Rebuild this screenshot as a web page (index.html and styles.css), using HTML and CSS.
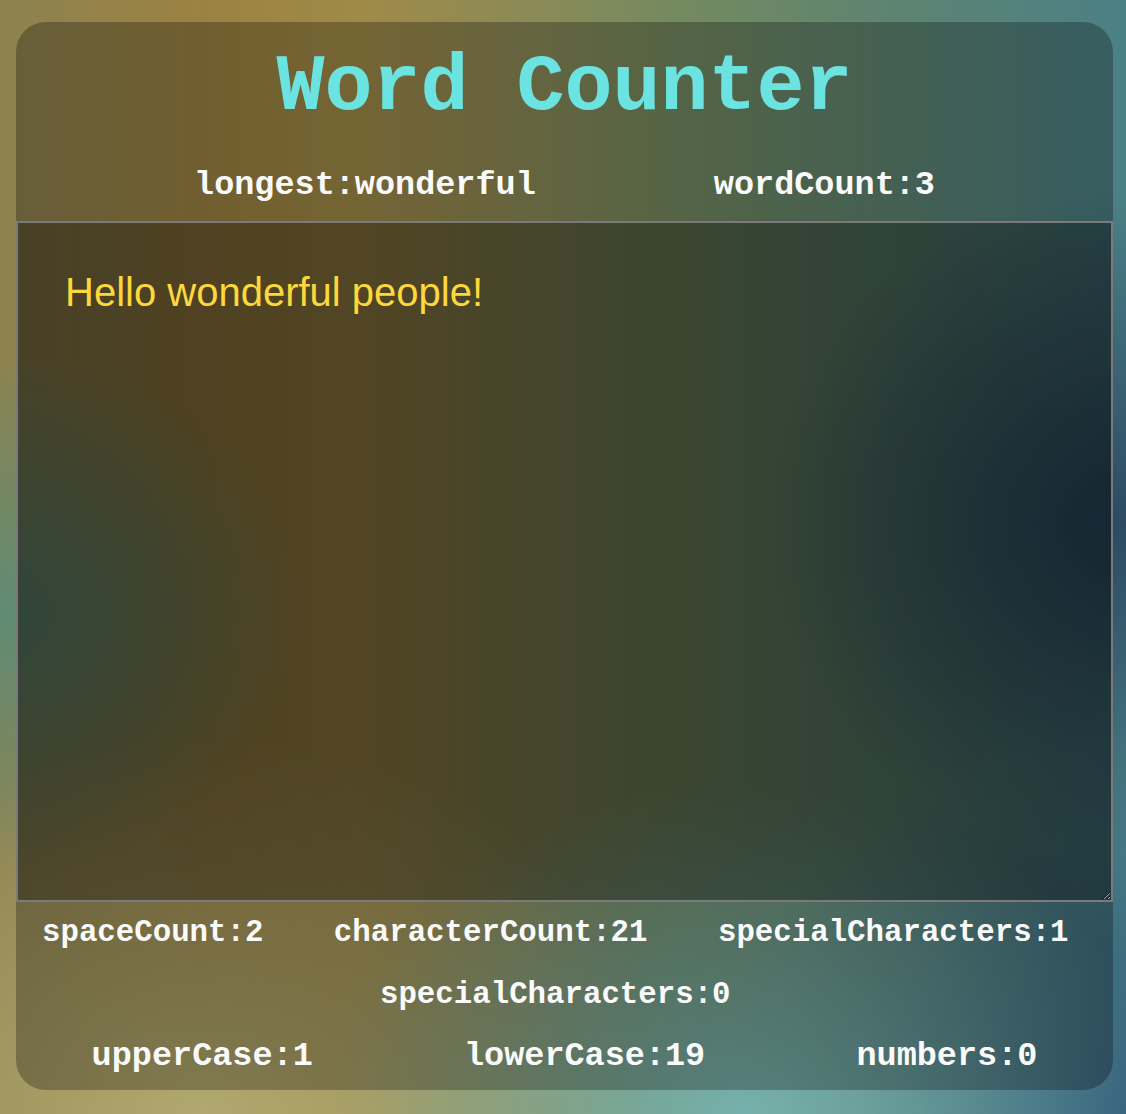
FILE: index.html
```html
<!DOCTYPE html>
<html lang="en">
<head>
<meta charset="utf-8">
<title>Word Counter</title>
<link rel="stylesheet" href="styles.css">
</head>
<body>
<main class="card">
  <h1 class="title">Word Counter</h1>
  <div class="top-stats">
    <p class="stat">longest:wonderful</p>
    <p class="stat">wordCount:3</p>
  </div>
  <textarea class="editor" spellcheck="false">Hello wonderful people!</textarea>
  <div class="mid-stats">
    <p class="stat stat-sm">spaceCount:2</p>
    <p class="stat stat-sm">characterCount:21</p>
    <p class="stat stat-sm">specialCharacters:1</p>
    <p class="stat stat-sm">specialCharacters:0</p>
  </div>
  <div class="bottom-stats">
    <p class="stat">upperCase:1</p>
    <p class="stat">lowerCase:19</p>
    <p class="stat">numbers:0</p>
  </div>
</main>
</body>
</html>
```
FILE: styles.css
```css
html, body {
  margin: 0;
  height: 100%;
}

body {
  box-sizing: border-box;
  padding: 22px 13px 25px 16px;
  font-family: "Liberation Sans", Arial, sans-serif;
  background:
    radial-gradient(ellipse 360px 330px at 100% 47%, rgba(44, 74, 98, 1) 0%, rgba(44, 74, 98, 0) 100%),
    radial-gradient(ellipse 300px 260px at 0% 55%, rgba(96, 139, 116, 1) 0%, rgba(96, 139, 116, 0) 100%),
    radial-gradient(ellipse 420px 330px at 66% 100%, rgba(118, 176, 172, 1) 0%, rgba(118, 176, 172, 0) 100%),
    radial-gradient(ellipse 460px 380px at 18% 100%, rgba(176, 168, 112, 1) 0%, rgba(176, 168, 112, 0) 100%),
    radial-gradient(ellipse 420px 360px at 100% 100%, rgba(52, 94, 122, 1) 0%, rgba(52, 94, 122, 0) 100%),
    linear-gradient(to right, #8d8250 0%, #9c8242 18%, #a08a48 32%, #8a8a58 48%, #748a60 60%, #5f8470 78%, #4b8086 100%);
}

.card {
  display: flex;
  flex-direction: column;
  width: 1097px;
  border-radius: 30px;
  background: rgba(0, 0, 0, 0.27);
  padding-bottom: 15px;
}

.title {
  margin: 20px 0 0;
  font-family: "Liberation Mono", "Courier New", monospace;
  font-weight: bold;
  font-size: 80px;
  line-height: 91px;
  color: #6be3e0;
  text-align: center;
}

.stat {
  margin: 0;
  font-family: "Liberation Mono", "Courier New", monospace;
  font-weight: bold;
  font-size: 33.5px;
  line-height: 38px;
  color: #fbfbfb;
  white-space: nowrap;
}

.stat-sm {
  font-size: 30.75px;
  line-height: 35px;
  padding-right: 0.6em;
}

.top-stats {
  display: flex;
  justify-content: space-evenly;
  margin-top: 33px;
}

.editor {
  display: block;
  box-sizing: border-box;
  width: 100%;
  height: 681px;
  margin: 17px 0 0;
  padding: 47px 47px 44px;
  border: 2px solid #7a7a7a;
  border-radius: 0;
  background: rgba(0, 0, 0, 0.3);
  color: #fdd83a;
  font-family: "Liberation Sans", Arial, sans-serif;
  font-size: 40px;
  outline: none;
  resize: vertical;
}

.mid-stats {
  display: flex;
  flex-wrap: wrap;
  justify-content: space-around;
  row-gap: 27px;
  margin-top: 13px;
}

.bottom-stats {
  display: flex;
  justify-content: space-around;
  margin-top: 25px;
}
```
